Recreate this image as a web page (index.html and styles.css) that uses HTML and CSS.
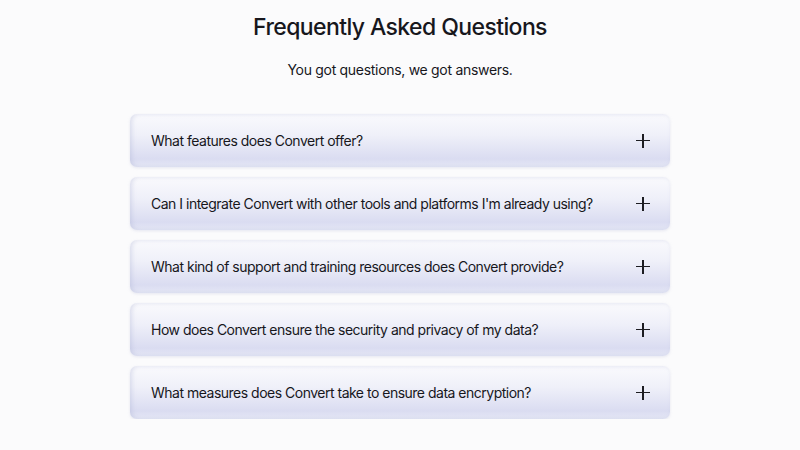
FILE: index.html
```html
<!DOCTYPE html>
<html lang="en">

<head>
  <link rel="stylesheet" href="styles.css">
</head>

<body>
  <div class="faq">
    <h1>Frequently Asked Questions</h1>
    <p class="sub">You got questions, we got answers.</p>

    <div class="list">
      <div class="item">
        <span>What features does Convert offer?</span>
        <span class="plus"></span>
      </div>
      <div class="item">
        <span>Can I integrate Convert with other tools and platforms I'm already using?</span>
        <span class="plus"></span>
      </div>
      <div class="item">
        <span>What kind of support and training resources does Convert provide?</span>
        <span class="plus"></span>
      </div>
      <div class="item">
        <span>How does Convert ensure the security and privacy of my data?</span>
        <span class="plus"></span>
      </div>
      <div class="item">
        <span>What measures does Convert take to ensure data encryption?</span>
        <span class="plus"></span>
      </div>
    </div>
  </div>
</body>

</html>
```

FILE: styles.css
```css
body {
  margin: 0;
  background-color: #fbfbfc;
  font-family: 'Inter', sans-serif;
  color: #17171c;
}

.faq {
  display: flex;
  flex-direction: column;
  align-items: center;
  padding-top: 12px;
}

h1 {
  margin: 0;
  font-size: 23px;
  font-weight: 500;
  letter-spacing: -0.6px;
  line-height: 30px;
}

.sub {
  margin: 18px 0 0;
  font-size: 14px;
  letter-spacing: -0.3px;
  line-height: 20px;
}

.list {
  margin-top: 34px;
  width: 540px;
  display: flex;
  flex-direction: column;
  gap: 10px;
}

.item {
  height: 53px;
  box-sizing: border-box;
  padding: 0 20px 0 21px;
  display: flex;
  align-items: center;
  justify-content: space-between;
  border-radius: 7px;
  background: linear-gradient(180deg, #fafafd 0%, #eff0f9 40%, #dadcf1 85%, #e6e8f6 100%);
  box-shadow: inset 2px 0 4px rgba(170, 175, 210, 0.35), 0 1px 3px rgba(200, 203, 225, 0.4);
  font-size: 14px;
  letter-spacing: -0.5px;
}

/* plus icon */
.plus {
  position: relative;
  width: 14px;
  height: 14px;
}

.plus::before,
.plus::after {
  content: '';
  position: absolute;
  background-color: #1d1d22;
}

.plus::before {
  left: 0;
  top: 6.3px;
  width: 14px;
  height: 1.5px;
}

.plus::after {
  left: 6.3px;
  top: 0;
  width: 1.5px;
  height: 14px;
}
```
